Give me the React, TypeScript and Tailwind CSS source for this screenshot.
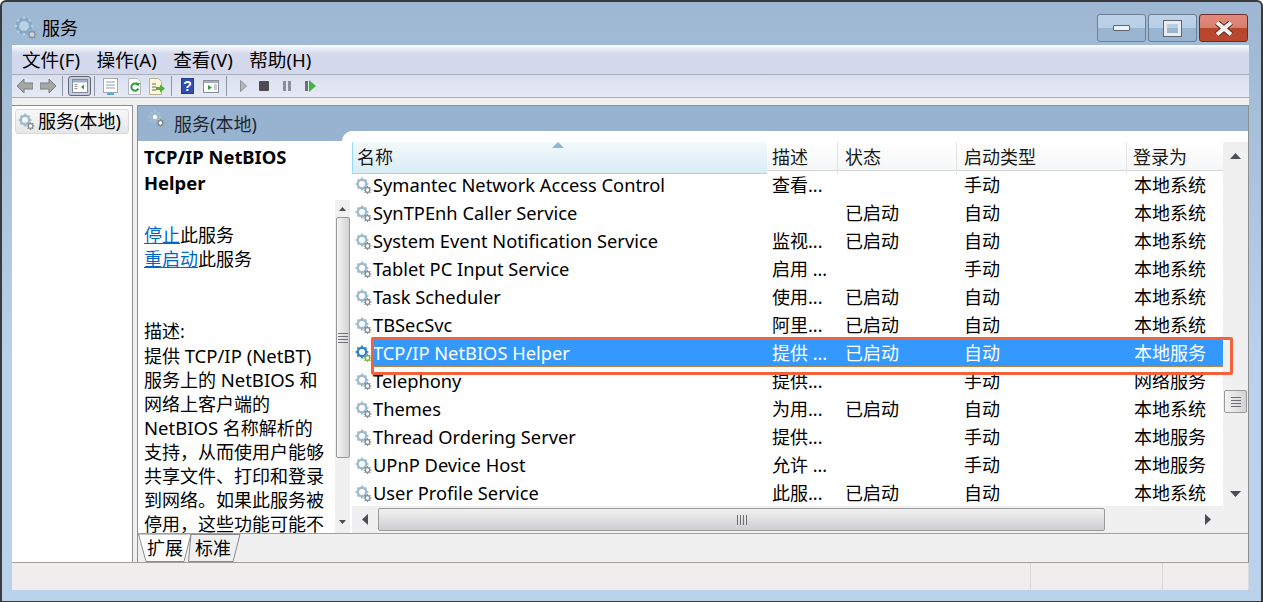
import React from 'react';

const cjk = { fontFamily: '"Noto Sans", "Noto Sans CJK SC", sans-serif' };

const rows = [
  ['Symantec Network Access Control', '查看...', '', '手动', '本地系统'],
  ['SynTPEnh Caller Service', '', '已启动', '自动', '本地系统'],
  ['System Event Notification Service', '监视...', '已启动', '自动', '本地系统'],
  ['Tablet PC Input Service', '启用 ...', '', '手动', '本地系统'],
  ['Task Scheduler', '使用...', '已启动', '自动', '本地系统'],
  ['TBSecSvc', '阿里...', '已启动', '自动', '本地系统'],
  ['TCP/IP NetBIOS Helper', '提供 ...', '已启动', '自动', '本地服务'],
  ['Telephony', '提供...', '', '手动', '网络服务'],
  ['Themes', '为用...', '已启动', '自动', '本地系统'],
  ['Thread Ordering Server', '提供...', '', '手动', '本地服务'],
  ['UPnP Device Host', '允许 ...', '', '手动', '本地服务'],
  ['User Profile Service', '此服...', '已启动', '自动', '本地系统'],
];

const gearTeeth = [0, 45, 90, 135, 180, 225, 270, 315];

const Gear = ({ active = false }: { active?: boolean }) => (
  <svg width="17" height="17" viewBox="0 0 17 17" className="shrink-0">
    <g stroke={active ? '#3f8fc4' : '#a9bfd2'} strokeWidth="2">
      {gearTeeth.map(a => (
        <line key={a} x1="7" y1="0.6" x2="7" y2="3" transform={`rotate(${a} 7 7)`} />
      ))}
    </g>
    <circle cx="7" cy="7" r="4.2" fill="none" stroke={active ? '#2f86c0' : '#9dbbd0'} strokeWidth="2.4" />
    <circle cx="7" cy="7" r="2.2" fill="#fff" />
    <g stroke={active ? '#6fb52c' : '#8a8f96'} strokeWidth="1.2">
      {gearTeeth.map(a => (
        <line key={a} x1="12.5" y1="9" x2="12.5" y2="10.5" transform={`rotate(${a} 12.5 13)`} />
      ))}
    </g>
    <circle cx="12.5" cy="13" r="2.3" fill="#fff" stroke={active ? '#6fb52c' : '#858b92'} strokeWidth="1.2" />
  </svg>
);

const BigGear = () => (
  <svg width="24" height="24" viewBox="0 0 24 24" className="shrink-0">
    <circle cx="10" cy="10" r="7" fill="none" stroke="#7fa9c6" strokeWidth="3" />
    <circle cx="10" cy="10" r="4.6" fill="#cfe2ee" opacity="0.6" />
    <g stroke="#b6cedf" strokeWidth="2.4">
      {gearTeeth.map(a => (
        <line key={a} x1="10" y1="0.5" x2="10" y2="3" transform={`rotate(${a} 10 10)`} />
      ))}
    </g>
    <g stroke="#8b98a6" strokeWidth="1.4">
      {gearTeeth.map(a => (
        <line key={a} x1="18" y1="14" x2="18" y2="16" transform={`rotate(${a} 18 18.5)`} />
      ))}
    </g>
    <circle cx="18" cy="18.5" r="3" fill="#c6d5e2" stroke="#8b98a6" strokeWidth="1.4" />
  </svg>
);

const Sep = ({ className = '' }: { className?: string }) => (
  <div className={`w-px h-[20px] bg-[#8f959e] ${className}`} />
);

const WinButton = ({ red = false, children }: { red?: boolean; children: React.ReactNode }) => (
  <div
    className={`w-[49px] h-[28px] rounded-[3px] border flex items-center justify-center ${
      red
        ? 'border-[#6b2b2b] bg-[linear-gradient(#e0897c_0%,#d98070_48%,#b8462c_50%,#b8482e_100%)]'
        : 'border-[#6f7f92] bg-[linear-gradient(#bcd2e8_0%,#b9cfe6_48%,#99b4cf_50%,#9ab5d0_100%)]'
    }`}
  >
    {children}
  </div>
);

const VScrollArrow = ({ up, small = false }: { up: boolean; small?: boolean }) => (
  <svg width={small ? 7 : 11} height={small ? 4 : 6} viewBox="0 0 11 6">
    <polygon points={up ? '5.5,0 11,6 0,6' : '0,0 11,0 5.5,6'} fill="#4a4f55" />
  </svg>
);

const Grip = () => (
  <div className="flex flex-col gap-[2px]">
    <div className="w-[10px] h-px bg-[#6d7177]" />
    <div className="w-[10px] h-px bg-[#6d7177]" />
    <div className="w-[10px] h-px bg-[#6d7177]" />
    <div className="w-[10px] h-px bg-[#6d7177]" />
  </div>
);

const Toolbar = () => (
  <div className="h-[23px] shrink-0 flex items-center pl-[5px] bg-[linear-gradient(#dbe0f0,#e6e9f6)] border-b border-[#a9aeb8]">
    <svg width="16" height="14" viewBox="0 0 16 14"><polygon points="0,7 7,0 7,4 16,4 16,10 7,10 7,14" fill="#a4a7a6" stroke="#7b7f80" /></svg>
    <svg width="16" height="14" viewBox="0 0 16 14" className="ml-[7px]"><polygon points="16,7 9,0 9,4 0,4 0,10 9,10 9,14" fill="#a4a7a6" stroke="#7b7f80" /></svg>
    <Sep className="ml-[6px]" />
    <div className="ml-[5px] w-[23px] h-[20px] rounded-[3px] border border-[#5f6773] bg-[#c5cdde] flex items-center justify-center">
      <svg width="16" height="14" viewBox="0 0 16 14">
        <rect x="0.5" y="0.5" width="15" height="13" fill="#fff" stroke="#7f8b99" />
        <rect x="1" y="1" width="14" height="2.5" fill="#9fb2c8" />
        <polygon points="12,5.5 9,8 12,10.5" fill="#2c9e3b" />
        <path d="M2.5 5.5h3M2.5 7.5h3M2.5 9.5h3" stroke="#8d99a6" />
      </svg>
    </div>
    <Sep className="ml-[3px]" />
    <svg width="15" height="17" viewBox="0 0 15 17" className="ml-[8px]">
      <rect x="0.5" y="0.5" width="14" height="14" fill="#fff" stroke="#a5a9ae" />
      <path d="M3 4h9M3 7h9M3 10h9" stroke="#8c9dae" />
      <rect x="4" y="15" width="7" height="2" fill="#42b3e6" />
    </svg>
    <svg width="13" height="17" viewBox="0 0 13 17" className="ml-[10px]">
      <path d="M0.5 0.5h9l3 3v13h-12z" fill="#fff" stroke="#b3b6ba" />
      <path d="M9.5 6.5a3.6 3.6 0 1 0 0.8 4" fill="none" stroke="#2f9c3e" strokeWidth="2" />
      <polygon points="8,4.5 12,5 10,8.5" fill="#2f9c3e" />
    </svg>
    <svg width="16" height="17" viewBox="0 0 16 17" className="ml-[8px]">
      <path d="M0.5 0.5h9l3 3v13h-12z" fill="#fdf8dc" stroke="#b8b390" />
      <path d="M3 6h4M3 9h4M3 12h4" stroke="#5f6770" />
      <polygon points="7,9 11,9 11,6.5 16,10.5 11,14.5 11,12 7,12" fill="#58b03c" />
    </svg>
    <Sep className="ml-[6px]" />
    <div className="ml-[9px] w-[13px] h-[16px] bg-[#2f4fb0] border border-[#233c8c] flex items-center justify-center text-white text-[14px] font-bold leading-none" style={{ fontFamily: '"Liberation Sans"' }}>?</div>
    <svg width="16" height="13" viewBox="0 0 16 13" className="ml-[9px]">
      <rect x="0.5" y="0.5" width="15" height="12" fill="#fff" stroke="#868d95" />
      <rect x="1" y="1" width="14" height="2" fill="#a7aeb6" />
      <polygon points="5,5 5,10 9,7.5" fill="#2f9c3e" />
      <path d="M11 5h3M11 7h3M11 9h3" stroke="#8d99a6" />
    </svg>
    <Sep className="ml-[7px]" />
    <svg width="7" height="12" viewBox="0 0 7 12" className="ml-[13px]"><polygon points="0.5,0.5 6.5,6 0.5,11.5" fill="#b4b7ba" stroke="#8f9398" /></svg>
    <div className="ml-[12px] w-[10px] h-[10px] rounded-[1px] bg-[#4a4c50]" />
    <div className="ml-[14px] flex gap-[2px]">
      <div className="w-[3px] h-[10px] bg-[#8c9096]" />
      <div className="w-[3px] h-[10px] bg-[#8c9096]" />
    </div>
    <div className="ml-[14px] flex items-center gap-px">
      <div className="w-[3px] h-[10px] bg-[#6b7076]" />
      <svg width="7" height="12" viewBox="0 0 7 12"><polygon points="0,0 7,6 0,12" fill="#3fb83a" /></svg>
    </div>
  </div>
);

const DescPanel = () => (
  <div className="w-[212px] shrink-0 flex bg-white overflow-hidden">
    <div className="flex-1 min-w-0 pl-[6px] text-[18px] leading-[24px] text-black overflow-hidden" style={cjk}>
      <div className="font-bold text-[18.4px] leading-[26px] pt-[3px] whitespace-nowrap">
        TCP/IP NetBIOS<br />Helper
      </div>
      <div className="mt-[27px]">
        <span className="text-[#0066cc] underline">停止</span>此服务
      </div>
      <div>
        <span className="text-[#0066cc] underline">重启动</span>此服务
      </div>
      <div className="mt-[48px] h-[25px]">描述:</div>
      <div className="whitespace-nowrap">
        提供 <span className="text-[18.5px]">TCP/IP (NetBT)</span><br />
        服务上的 <span className="text-[18.5px]">NetBIOS</span> 和<br />
        网络上客户端的<br />
        <span className="text-[18.5px]">NetBIOS</span> 名称解析的<br />
        支持，从而使用户能够<br />
        共享文件、打印和登录<br />
        到网络。如果此服务被<br />
        停用，这些功能可能不
      </div>
    </div>
    <div className="w-[15px] shrink-0 mt-[59px] bg-[#f0f0f0] flex flex-col items-center">
      <div className="h-[17px] flex items-center"><VScrollArrow up small /></div>
      <div className="w-[14px] h-[241px] rounded-[2px] border border-[#9a9a9a] bg-[linear-gradient(90deg,#f4f4f4,#d2d2d2)] flex items-center justify-center"><Grip /></div>
      <div className="mt-auto h-[22px] flex items-center"><VScrollArrow up={false} small /></div>
    </div>
  </div>
);

const ListPanel = () => (
  <div className="relative flex-1 min-w-0 -mt-[10px] bg-white pt-[11px] pl-[2px] flex flex-col">
    <div className="absolute -left-[8px] top-0 w-[16px] h-[11px] bg-white rounded-tl-[10px]" />
    <div className="flex flex-1 min-h-0">
      <div className="flex-1 min-w-0 flex flex-col" style={cjk}>
        <div className="relative grid grid-cols-[415px_71px_119px_170px_1fr] h-[29px] text-[18px] leading-[31px] text-[#1a1a1a] border-b border-[#d5d5d5] bg-[linear-gradient(#ffffff,#f5f6f7)]">
          <div className="pl-[4px] bg-[linear-gradient(#f2f9fc,#d9ecf5)] border-l border-b border-[#96d9f9]">名称</div>
          <div className="pl-[5px] border-r border-[#e3e3e3]">描述</div>
          <div className="pl-[7px] border-r border-[#e3e3e3]">状态</div>
          <div className="pl-[7px] border-r border-[#e3e3e3]">启动类型</div>
          <div className="pl-[6px]">登录为</div>
          <svg width="12" height="6" viewBox="0 0 12 6" className="absolute left-[200px] top-[0px]">
            <polygon points="6,0 12,6 0,6" fill="#8fb6cc" />
          </svg>
        </div>
        <div>
          {rows.map((r, i) => {
            const selected = i === 6;
            return (
              <div key={r[0]} className="flex h-[28px] items-center">
                <div className="w-[19px] shrink-0 flex justify-center pl-[3px]"><Gear active={selected} /></div>
                <div
                  className={`flex-1 grid grid-cols-[399px_73px_119px_170px_1fr] ml-[2px] items-center text-[18px] leading-[24px] whitespace-nowrap ${
                    selected
                      ? 'h-[28px] bg-[#3399ff] text-white border-y border-dotted border-[#c98a50]'
                      : 'h-[24px] text-black'
                  }`}
                >
                  <div className="text-[18.3px]">{r[0]}</div>
                  <div>{r[1]}</div>
                  <div>{r[2]}</div>
                  <div>{r[3]}</div>
                  <div>{r[4]}</div>
                </div>
              </div>
            );
          })}
        </div>
      </div>
      <div className="w-[25px] shrink-0 bg-[#f0f0f0] flex flex-col items-center">
        <div className="h-[28px] flex items-center"><VScrollArrow up /></div>
        <div className="mt-[220px] w-[23px] h-[23px] rounded-[2px] border border-[#9a9a9a] bg-[linear-gradient(90deg,#f4f4f4,#d2d2d2)] flex items-center justify-center"><Grip /></div>
        <div className="mt-auto h-[24px] flex items-center"><VScrollArrow up={false} /></div>
      </div>
    </div>
    <div className="h-[27px] shrink-0 bg-[#f0f0f0] flex items-center">
      <div className="w-[26px] flex justify-center">
        <svg width="6" height="11" viewBox="0 0 6 11"><polygon points="6,0 6,11 0,5.5" fill="#4a4f55" /></svg>
      </div>
      <div className="w-[727px] h-[23px] rounded-[2px] border border-[#9a9a9a] bg-[linear-gradient(#f0f0f0,#cfcfd1)] flex items-center justify-center">
        <div className="flex gap-[2px]">
          <div className="w-px h-[10px] bg-[#6d7177]" />
          <div className="w-px h-[10px] bg-[#6d7177]" />
          <div className="w-px h-[10px] bg-[#6d7177]" />
          <div className="w-px h-[10px] bg-[#6d7177]" />
        </div>
      </div>
      <div className="flex-1 flex justify-end pr-[37px]">
        <svg width="6" height="11" viewBox="0 0 6 11"><polygon points="0,0 0,11 6,5.5" fill="#4a4f55" /></svg>
      </div>
    </div>
  </div>
);

const Tab = ({ label, active = false }: { label: string; active?: boolean }) => (
  <div className="relative w-[53px] h-[28px] -mr-[3px] text-[18px] leading-[28px] text-black">
    <svg width="53" height="28" viewBox="0 0 53 28" className="absolute left-0 top-0">
      <polygon
        points={active ? '0.5,0 8,27.5 46,27.5 53,0' : '3,0.5 0.5,27.5 45,27.5 52,0.5'}
        fill={active ? '#fff' : '#f0f0f0'}
        stroke="#8a8a8a"
      />
    </svg>
    <span className={`relative ${active ? 'pl-[9px]' : 'pl-[7px]'}`}>{label}</span>
  </div>
);

const Tabs = () => (
  <div className="h-[29px] shrink-0 bg-[#f0f0f0] border-t border-[#a0a0a0] flex" style={cjk}>
    <Tab label="扩展" active />
    <Tab label="标准" />
  </div>
);

export default function App() {
  return (
    <div className="relative w-[1263px] h-[602px] overflow-hidden bg-[linear-gradient(#9db7d2,#b9d1ea_60%,#bad2ea)] border-2 border-b border-[#3a3a3a] rounded-t-[6px]" style={cjk}>
      <div className="h-[43px] flex items-start justify-between pr-[11px]">
        <div className="flex items-center pl-[12px] pt-[14px] gap-[4px] text-[18px] leading-[24px] text-black">
          <BigGear />
          <span>服务</span>
        </div>
        <div className="flex gap-[2px] pt-[12px] pr-[2px]">
          <WinButton>
            <div className="w-[17px] h-[6px] rounded-[1px] bg-[#eef1f4] border border-[#5d6672]" />
          </WinButton>
          <WinButton>
            <div className="w-[17px] h-[15px] border-[3px] border-[#e8ecf0] outline-1 outline-[#5d6672]" />
          </WinButton>
          <WinButton red>
            <svg width="18" height="15" viewBox="0 0 18 15">
              <path d="M2 1.5L16 13.5M16 1.5L2 13.5" stroke="#5c2b22" strokeWidth="6" />
              <path d="M2 1.5L16 13.5M16 1.5L2 13.5" stroke="#f4f0ee" strokeWidth="4" />
            </svg>
          </WinButton>
        </div>
      </div>

      <div className="mx-[10px] w-[1237px] h-[545px] flex flex-col bg-[#f0f0f0]">
        <div className="h-[30px] shrink-0 flex items-center pl-[10px] gap-[16.5px] text-[18.6px] leading-[24px] text-black border-b border-[#a9aeb8] bg-[linear-gradient(#fbfcfe_0%,#d4d9ec_30%,#d3d8ec_100%)]">
          <span>文件(F)</span>
          <span>操作(A)</span>
          <span>查看(V)</span>
          <span>帮助(H)</span>
        </div>
        <Toolbar />

        <div className="flex-1 min-h-0 flex pt-[7px] bg-[#f0f0f0]">
          <div className="w-[121px] shrink-0 bg-white border-t border-r border-[#8f8f8f] p-[3px]">
            <div className="h-[25px] flex items-center gap-[3px] pl-[2px] rounded-[3px] border border-[#d9d9d9] bg-[linear-gradient(#f8f8f8,#e6e6e6)] text-[18px] leading-[21px] whitespace-nowrap">
              <Gear />
              <span>服务(本地)</span>
            </div>
          </div>
          <div className="w-[4px] shrink-0" />
          <div className="flex-1 min-w-0 flex flex-col border-t-[1px] border-l border-r border-[#8f8f8f]">
            <div className="h-[35px] shrink-0 bg-[#98b3cf] flex items-start pl-[10px] pt-[4px] gap-[9px] text-[18px] leading-[28px] text-[#1c2733]">
              <Gear />
              <span>服务(本地)</span>
            </div>
            <div className="flex-1 min-h-0 flex">
              <DescPanel />
              <ListPanel />
            </div>
            <Tabs />
          </div>
        </div>

        <div className="h-[28px] shrink-0 bg-[#f0eded] border-t border-[#a0a0a0] flex justify-end">
          <div className="w-[132px] border-l border-[#d8d8d8]" />
          <div className="w-[87px] border-x border-[#d8d8d8]" />
        </div>
      </div>

      {/* rectangle drawn on top of the screenshot */}
      <div className="absolute left-[369px] top-[335px] w-[862px] h-[38px] border-[3px] border-[#f4623a] rounded-[2px] pointer-events-none" />
    </div>
  );
}
